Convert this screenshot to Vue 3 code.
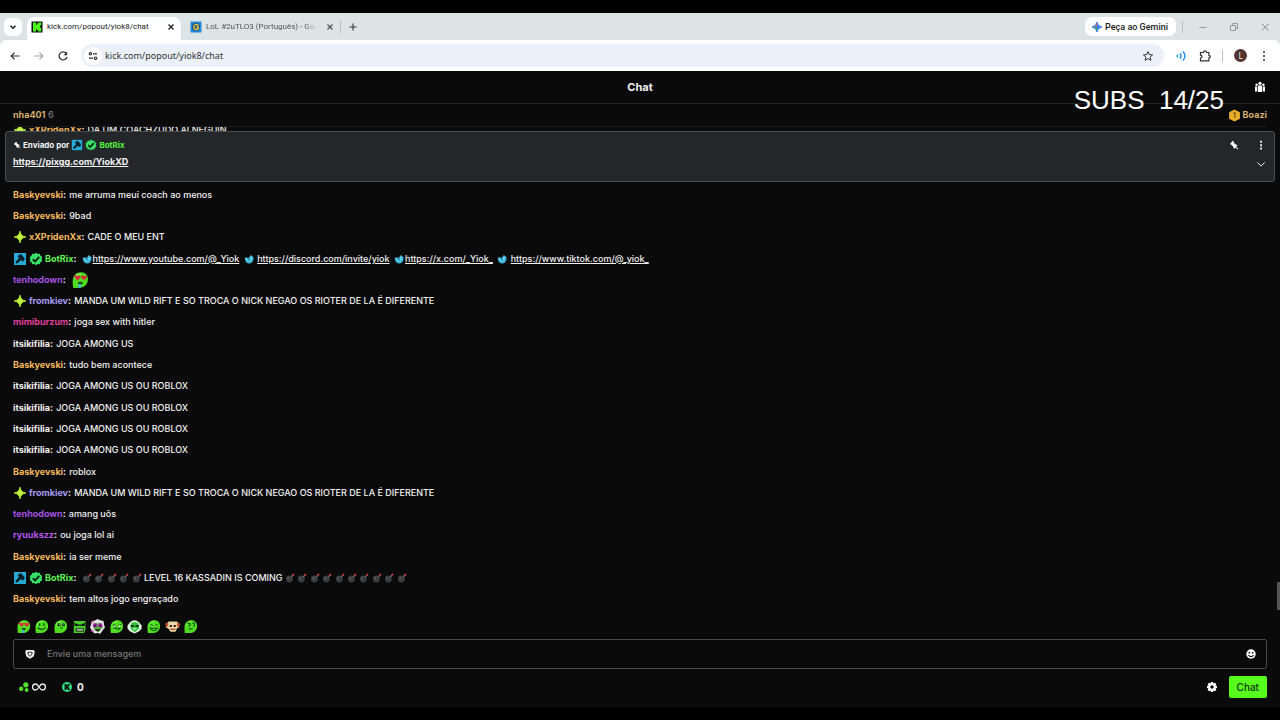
<script setup>
import { ref } from 'vue'

const draft = ref('')
const address = ref('kick.com/popout/yiok8/chat')
const subs = 'SUBS\u00a0 14/25'

const t = (text) => ({ type: 'text', text })
const link = (text) => ({ type: 'link', text })
const icon = (name) => ({ type: 'icon', name })
const bombs = (n) => Array.from({ length: n }, () => [icon('bomb'), t(' ')]).flat()

const gold = '#f4b860'
const green = '#63f554'
const lilac = '#a79bf2'
const violet = '#a352e0'

const bask = (text) => ({ name: 'Baskyevski', color: gold, badges: [], parts: [t(text)] })
const itsi = (text) => ({ name: 'itsikifilia', color: '#f0f0f0', badges: [], parts: [t(text)] })
const from = () => ({
  name: 'fromkiev',
  color: lilac,
  badges: ['star'],
  parts: [t('MANDA UM WILD RIFT E SO TROCA O NICK NEGAO OS RIOTER DE LA É DIFERENTE')],
})

const clipped = { name: 'xXPridenXx', color: gold, badges: ['star'], parts: [t('DA UM COACHZUDO AI NEGUIN')] }

const messages = [
  bask('me arruma meui coach ao menos'),
  bask('9bad'),
  { name: 'xXPridenXx', color: gold, badges: ['star'], parts: [t('CADE O MEU ENT')] },
  {
    name: 'BotRix',
    color: green,
    badges: ['mod', 'verified'],
    parts: [
      icon('drop'), link('https://www.youtube.com/@_Yiok'),
      t(' '), icon('drop'), t(' '), link('https://discord.com/invite/yiok'),
      t(' '), icon('drop'), link('https://x.com/_Yiok_'),
      t(' '), icon('drop'), t(' '), link('https://www.tiktok.com/@_yiok_'),
    ],
  },
  { name: 'tenhodown', color: violet, badges: [], parts: [icon('e0')] },
  from(),
  { name: 'mimiburzum', color: '#e0409c', badges: [], parts: [t('joga sex with hitler')] },
  itsi('JOGA AMONG US'),
  bask('tudo bem acontece'),
  itsi('JOGA AMONG US OU ROBLOX'),
  itsi('JOGA AMONG US OU ROBLOX'),
  itsi('JOGA AMONG US OU ROBLOX'),
  itsi('JOGA AMONG US OU ROBLOX'),
  bask('roblox'),
  from(),
  { name: 'tenhodown', color: violet, badges: [], parts: [t('amang uôs')] },
  { name: 'ryuukszz', color: '#b455ee', badges: [], parts: [t('ou joga lol ai')] },
  bask('ia ser meme'),
  {
    name: 'BotRix',
    color: green,
    badges: ['mod', 'verified'],
    parts: [t(' '), ...bombs(5), t('LEVEL 16 KASSADIN IS COMING '), ...bombs(10)],
  },
  bask('tem altos jogo engraçado'),
]

const iconClass = { e0: 'emote', drop: 'emoji drop', bomb: 'emoji' }

const emotes = Array.from({ length: 10 }, (_, i) => 'e' + i)
</script>

<template>
  <div class="screen">
    <svg class="defs" aria-hidden="true">
      <symbol id="star" viewBox="0 0 14 14">
        <path d="M7 1.200Q7.800 6.200 12.800 7 7.800 7.800 7 12.800 6.200 7.800 1.200 7 6.200 6.200 7 1.200Z" fill="#a5e22c" stroke="#a5e22c" stroke-width="1" />
        <path d="M7 3Q7.600 6.400 11 7 7.600 7.600 7 11 6.400 7.600 3 7 6.400 6.400 7 3Z" fill="#c9f04c" />
      </symbol>
      <symbol id="mod" viewBox="0 0 14 14">
        <rect x="1" y="1" width="12" height="12" fill="#27a9d6" />
        <path d="M6.200 2.400 8.400 2.600 11.600 6.200 11.200 8.600 9.400 9.400 8 8 4 11.800 2.200 10.200 6 6.200 4.800 4.800Z" fill="#0a2029" />
      </symbol>
      <symbol id="verified" viewBox="0 0 14 14">
        <path d="M7 .7 8.7 2l2.1-.2.7 2 1.8 1.1L12.7 7l.6 2.1-1.8 1.1-.7 2-2.1-.2L7 13.3 5.3 12l-2.1.2-.7-2L.7 9.1 1.3 7 .7 4.9l1.8-1.1.7-2 2.1.2Z" fill="#38e067" />
        <path d="m3.8 7.2 2.3 2.2 4.2-4.6" fill="none" stroke="#07240f" stroke-width="2" />
      </symbol>
      <symbol id="drop" viewBox="0 0 12 12">
        <path d="M1 4.6C3 3.600 4.500 4.600 6.200 4.400L7.600 1.400 9.600 2.200l1.800 2C11.800 8.400 9.600 11.400 6 11.400 2.800 11.400 1 8.600 1 4.600Z" fill="#3bb8dc" />
        <path d="M1.800 5.400C3.600 5 4 6.600 6 6.200c2-.4 1.400-2.400 3.200-2.600C9.400 7.400 5.200 10.600 1.800 5.400Z" fill="#8be6f4" />
        <path d="M3.600 5.200c1.600 0 2 1.600 4 .2L6 7.800Z" fill="#12567c" />
      </symbol>
      <symbol id="bomb" viewBox="0 0 12 12">
        <circle cx="5.2" cy="7.2" r="4.1" fill="#3b3d3f" />
        <circle cx="4" cy="6" r="1.2" fill="#5b5d5f" />
        <path d="m7.6 4.6 1.6-1.8" stroke="#777" stroke-width="1.6" />
        <path d="m9 2.900 1.800-1.800" stroke="#f04a42" stroke-width="1.8" />
      </symbol>
      <symbol id="blob" viewBox="0 0 16 16">
        <path d="M2 15C1.6 13 1.4 10.6 1.6 8 2 3.6 5 1.2 9 1.2c3.8 0 6 2.6 6 6.2 0 4.2-2.6 7-6.6 7.4Z" fill="#4fdd22" />
        <path d="M3.4 7C4 4 6.4 2.6 9 2.8" fill="none" stroke="#8bf55c" />
      </symbol>
      <symbol id="e0" viewBox="0 0 16 16">
        <use href="#blob" />
        <path d="M2.6 4.6c1-1.6 2.4-.8 3 .2.8-1.2 2.8-1 2.8.8L5.8 8.6ZM8.8 5.6c0-1.8 2-2 2.8-.8.8-1.2 2.8-1 2.6.8L11.6 8.4Z" fill="#dc2c3a" />
        <path d="M6 10.4q2-1.8 4.6 0l-.6 1.4H6.6Z" fill="#123a12" />
        <path d="M6.6 11.4h2.2V15H6.6Z" fill="#3fb4d8" />
      </symbol>
      <symbol id="e1" viewBox="0 0 16 16">
        <use href="#blob" />
        <path d="M6 4.5v3M10.6 4.5v3M4 9.4q4 3.4 8.6-.2" fill="none" stroke="#0d4413" stroke-width="1.3" />
      </symbol>
      <symbol id="e2" viewBox="0 0 16 16">
        <use href="#blob" />
        <circle cx="6.4" cy="6" r="1.7" fill="#15321a" /><circle cx="11.2" cy="6" r="1.7" fill="#15321a" />
        <circle cx="6.8" cy="5.4" r=".6" fill="#fff" /><circle cx="11.6" cy="5.4" r=".6" fill="#fff" />
        <path d="M7.4 9.6h3" stroke="#0d4413" />
      </symbol>
      <symbol id="e3" viewBox="0 0 16 16">
        <path d="M2 2h12.4v9.4L13 15H1.8Z" fill="#4ac92b" />
        <path d="m2.6 4 4.2 1.8h2.8L13.8 4v3.4H9.4L8.2 6.8 7 7.4H2.6Z" fill="#10240f" />
        <path d="M4 10h8.6v3.4H4Z" fill="#10240f" /><path d="M5 11.6h6.8" stroke="#eee" stroke-width="1.3" />
      </symbol>
      <symbol id="e4" viewBox="0 0 16 16">
        <path d="M8 0 11 1.4 14.4 2 15 6 16 9l-2.4 3L11 15.6 8 15l-3.4.4L2 12.2 0 9l1.2-3.4L2 2l3.4-.4Z" fill="#e4e2e6" />
        <path d="M4 4.4h8.4l1 5L8.6 14 4 11Z" fill="#47c52e" />
        <circle cx="5.4" cy="7" r="2.4" fill="#a922a8" /><circle cx="11" cy="7" r="2.4" fill="#a922a8" />
        <circle cx="5.4" cy="7" r="1" fill="#221027" /><circle cx="11" cy="7" r="1" fill="#221027" />
        <path d="M5 11h6.4l-1.8 2H7Z" fill="#251b26" /><path d="M1 3h3M1 13h3" stroke="#d13eab" stroke-width="1.4" />
      </symbol>
      <symbol id="e5" viewBox="0 0 16 16">
        <use href="#blob" />
        <path d="M4 6.2 7 7M10 6.8l3-1M5 10.2q2-1.4 3.4 0t3.8-.6" fill="none" stroke="#0d4413" stroke-width="1.1" />
        <circle cx="6" cy="7.8" r=".9" fill="#eee" /><circle cx="11.4" cy="7.4" r=".9" fill="#eee" />
      </symbol>
      <symbol id="e6" viewBox="0 0 16 16">
        <path d="M3 3.6Q8-1 13 3.6L15.6 7v3L13 13l-5 2.4L3 13 .6 10V7Z" fill="#e2f4e4" />
        <path d="M4 4.8Q8 1.6 12.4 4.8L13 10l-4.4 4L4 10.6Z" fill="#34c73a" />
        <path d="M4 6.4h3.4v2H4Zm5 0h3.4v2H9Z" fill="#15321a" /><path d="M6.4 11q2-1.6 3.6 0" stroke="#fff" fill="none" />
      </symbol>
      <symbol id="e7" viewBox="0 0 16 16">
        <use href="#blob" />
        <path d="M4.4 6.8q1.4-2 2.8 0M9.8 6.8q1.4-2 2.8 0M4.2 9.6q4.2 1 8.6 0-1 2.8-4.2 2.8T4.2 9.6Z" fill="none" stroke="#0d4413" stroke-width="1" />
      </symbol>
      <symbol id="e8" viewBox="0 0 16 16">
        <path d="M1 5.4 4 2.6h8.6L15.4 5l-.6 4-2 .8-1.6 3.8H6L3.4 10l-2-.6Z" fill="#e9d7a6" />
        <path d="M.6 4.6 3.4 4v4.2L.8 8ZM12.8 4l2.8.6V8l-2.8.2Z" fill="#c4502b" />
        <path d="M5 6.4h2.4v2.2H5Zm4.2 0h2.4v2.2H9.2Z" fill="#4b1c14" /><path d="M5.6 11h5.6" stroke="#b3422e" stroke-width="1.4" />
      </symbol>
      <symbol id="e9" viewBox="0 0 16 16">
        <use href="#blob" />
        <path d="M5 5.4q1.4-2 2.4-.2T6 8M10 4.6q2-1.2 2.4.6T10.8 8M6.4 11.2q2-1.4 4-.4" fill="none" stroke="#0d4413" stroke-width="1.1" />
      </symbol>
      <symbol id="pin" viewBox="0 0 12 12">
        <path d="M1.6 4.2 4.6 1l1.2 1.2-.1 1L8 5.4l1.4.2.8 1-1.7 1.6 2.7 2.4-.7.8L8 8.9 6.4 10.4l-1-.8L5.2 8 3 5.7l-1-.1Z" fill="#fff" />
      </symbol>
      <symbol id="dots" viewBox="0 0 12 12">
        <path d="M5 1h2.2v2.4H5Zm0 4h2.2v2.4H5Zm0 4h2.2v2.4H5Z" fill="currentColor" />
      </symbol>
      <symbol id="close" viewBox="0 0 12 12">
        <path d="m3.500 3.500 5 5M8.500 3.500l-5 5" fill="none" stroke="currentColor" stroke-width="1.3" />
      </symbol>
    </svg>

    <header class="browser">
      <div class="tabs">
        <button class="chip" aria-label="Pesquisar guias">
          <svg class="i12" viewBox="0 0 12 12"><path d="m3.500 4.800 2.500 2.500 2.500-2.500" fill="none" stroke="#222" stroke-width="1.5" /></svg>
        </button>
        <div class="tab active">
          <svg class="i12" viewBox="0 0 12 12">
            <rect x=".5" y=".5" width="11" height="11" fill="#0b120a" />
            <path d="M2 1.6h3v2.2h1V2.6h1.2V1.6h3v3H9v2h1.2v3.8h-3V9.2H6V8.2H5v2.2H2Z" fill="#4cf51d" />
          </svg>
          <span class="tab-title">kick.com/popout/yiok8/chat</span>
          <button class="plain" aria-label="Fechar"><svg class="i12"><use href="#close" /></svg></button>
        </div>
        <div class="tab">
          <svg class="i12" viewBox="0 0 12 12">
            <rect x=".5" y=".5" width="11" height="11" fill="#2089dc" />
            <circle cx="6" cy="6" r="4" fill="#184d75" />
            <path d="M8.400 4.400C6.600 2.600 3.800 3.600 3.800 6s2.800 3.400 4.400 1.800V6H6.400" fill="none" stroke="#e9c44a" stroke-width="1.5" />
          </svg>
          <span class="tab-title faded">LoL #2uTLO3 (Português) - Gar</span>
          <button class="plain" aria-label="Fechar"><svg class="i12"><use href="#close" /></svg></button>
        </div>
        <i class="sep"></i>
        <button class="plain plus" aria-label="Nova guia">
          <svg class="i12" viewBox="0 0 12 12"><path d="M6 2.4v7.2M2.4 6h7.2" stroke="#333" stroke-width="1.1" /></svg>
        </button>
        <div class="grow"></div>
        <button class="gemini">
          <svg class="i12" viewBox="0 0 12 12">
            <path d="M6 1Q6.600 5.400 11 6 6.600 6.600 6 11 5.400 6.600 1 6 5.400 5.400 6 1Z" fill="#3a7df0" stroke="#3a7df0" />
            <path d="M6 1Q5.400 5.400 3 5.600H6Z" fill="#e05a50" />
            <path d="M1 6q4.400.6 5 5V6Z" fill="#3fa36a" />
          </svg>
          Peça ao Gemini
        </button>
        <i class="sep win-sep"></i>
        <div class="window-buttons">
          <button class="plain" aria-label="Minimizar"><svg class="i12" viewBox="0 0 12 12"><path d="M2.500 6.500h7" stroke="#999" /></svg></button>
          <button class="plain" aria-label="Restaurar">
            <svg class="i12" viewBox="0 0 12 12"><path d="M2.500 4.500h5v5h-5ZM4.500 4.500v-2h5v5h-2" fill="none" stroke="#999" /></svg>
          </button>
          <button class="plain" aria-label="Fechar janela"><svg class="i12" viewBox="0 0 12 12"><path d="m3 3 6.500 6.500M9.500 3 3 9.500" stroke="#888" /></svg></button>
        </div>
      </div>

      <div class="toolbar">
        <button class="plain" aria-label="Voltar"><svg class="i12" viewBox="0 0 12 12"><path d="M10.500 6H2.400M5.600 2.600 2.200 6l3.400 3.400" fill="none" stroke="#333" stroke-width="1.200" /></svg></button>
        <button class="plain" aria-label="Avançar"><svg class="i12" viewBox="0 0 12 12"><path d="M1.500 6h8.100M6.400 2.600 9.800 6 6.400 9.400" fill="none" stroke="#a5a5a5" stroke-width="1.200" /></svg></button>
        <button class="plain" aria-label="Recarregar">
          <svg class="i12" viewBox="0 0 12 12"><path d="M9.300 3.500A4 4 0 1 0 10 6.800" fill="none" stroke="#333" stroke-width="1.300" /><path d="M10.200 1.500v3.700H6.500Z" fill="#333" /></svg>
        </button>
        <div class="address">
          <span class="site">
            <svg class="i12" viewBox="0 0 12 12" fill="none" stroke="#333" stroke-width="1.200"><circle cx="3.400" cy="3.800" r="1.200" /><path d="M6 3.800h4M2 8.200h4" /><circle cx="8.600" cy="8.200" r="1.200" /></svg>
          </span>
          <input v-model="address" aria-label="Endereço" />
          <button class="plain" aria-label="Favorito">
            <svg class="i12" viewBox="0 0 12 12"><path d="m6 1.600 1.300 3 3.300.3-2.500 2.200.8 3.200L6 8.600l-2.900 1.700.8-3.200L1.400 4.900l3.300-.3Z" fill="none" stroke="#333" /></svg>
          </button>
        </div>
        <div class="extensions">
          <svg class="i12" viewBox="0 0 12 12" fill="none" stroke="#1b93e8" stroke-width="1.400"><path d="M1 4.500q1.200 1.500 0 3M4 3.500q2 2.500 0 5M7 1.500q4 4.500 0 9" /></svg>
          <svg class="i12" viewBox="0 0 12 12"><path d="M1.500 2.500h3q0-1.600 1.500-1.600t1.500 1.600h2.400v3q1.500 0 1.500 1.100T9.900 7.900v2.900H1.500V8Q3 8 3 6.600T1.500 5.200Z" fill="none" stroke="#333" stroke-width="1.200" /></svg>
          <i class="sep"></i>
          <span class="avatar">L</span>
          <button class="plain" aria-label="Menu"><svg class="i12" viewBox="0 0 12 12" fill="#333"><circle cx="6" cy="2" r="1" /><circle cx="6" cy="6" r="1" /><circle cx="6" cy="10" r="1" /></svg></button>
        </div>
      </div>
    </header>

    <main class="chat">
      <div class="chat-head">
        <h1>Chat</h1>
        <button class="plain viewers" aria-label="Espectadores">
          <svg class="i12" viewBox="0 0 12 12" fill="#fff"><circle cx="6" cy="2.300" r="1.600" /><circle cx="2.600" cy="3.800" r="1.200" /><circle cx="9.400" cy="3.800" r="1.200" /><path d="M4 4.600h4V11H4ZM1 5.600h2.300v4.900H1ZM8.700 5.600H11v4.900H8.700Z" /></svg>
        </button>
      </div>

      <div class="ranking">
        <span><b>nha401</b> <span class="count">6</span></span>
        <span class="leader">
          <svg class="medal" viewBox="0 0 12 12"><path d="m6 .4 5 2.700v5.800L6 11.600 1 8.900V3.100Z" fill="#e9ad2c" /><path d="M5 4.200 6.400 3.400v5" fill="none" stroke="#8a5a0c" stroke-width="1.200" /></svg>
          <b>Boazi</b>
        </span>
      </div>

      <div class="peek">
        <p class="message">
          <span class="line"><svg v-for="b in clipped.badges" :key="b" class="badge"><use :href="'#' + b" /></svg><b :style="{ color: clipped.color }">{{ clipped.name }}</b><b class="colon">: </b><template v-for="(p, i) in clipped.parts" :key="i">{{ p.text }}</template></span>
        </p>
      </div>

      <section class="pinned">
        <div class="pinned-row">
          <svg class="tiny"><use href="#pin" /></svg>
          <b>Enviado por</b>
          <svg class="i12"><use href="#mod" /></svg>
          <svg class="i12"><use href="#verified" /></svg>
          <b class="bot">BotRix</b>
          <div class="grow"></div>
          <button class="plain unpin" aria-label="Desafixar"><svg class="small"><use href="#pin" /></svg></button>
          <button class="plain" aria-label="Opções"><svg class="small"><use href="#dots" /></svg></button>
        </div>
        <div class="pinned-row">
          <a href="https://pixgg.com/YiokXD">https://pixgg.com/YiokXD</a>
          <div class="grow"></div>
          <button class="plain expand" aria-label="Expandir"><svg class="small" viewBox="0 0 12 12"><path d="m1.500 4 4.500 4.500L10.500 4" fill="none" stroke="#eee" stroke-width="1.200" /></svg></button>
        </div>
      </section>

      <div class="messages">
        <p v-for="(m, n) in messages" :key="n" class="message">
          <span class="line"><svg v-for="b in m.badges" :key="b" class="badge"><use :href="'#' + b" /></svg><b :style="{ color: m.color }">{{ m.name }}</b><b class="colon">: </b><template v-for="(p, i) in m.parts" :key="i"><a v-if="p.type === 'link'" :href="p.text">{{ p.text }}</a><svg v-else-if="p.type === 'icon'" :class="iconClass[p.name]"><use :href="'#' + p.name" /></svg><template v-else>{{ p.text }}</template></template></span>
        </p>
        <i class="thumb"></i>
      </div>

      <div class="emotes">
        <button v-for="e in emotes" :key="e" class="plain" :aria-label="'Emote ' + e"><svg class="quick"><use :href="'#' + e" /></svg></button>
      </div>

      <form class="composer" @submit.prevent>
        <div class="field">
          <svg class="i12" viewBox="0 0 12 12"><path d="M2.400 2h7.200l1.200 1.400-1 4.800L6 10.800 2.200 8.200l-1-4.800Z" fill="#f2f2f2" /><path d="M3.800 4.200h4.400L7.600 7 6 8.200 4.400 7Z" fill="none" stroke="#333" /></svg>
          <input v-model="draft" placeholder="Envie uma mensagem" aria-label="Mensagem" />
          <button class="plain" type="button" aria-label="Emotes">
            <svg class="i12" viewBox="0 0 12 12"><circle cx="6" cy="6" r="4.700" fill="#fff" /><path d="M3.600 4h1.600v1.600H3.600ZM6.800 4h1.600v1.600H6.800Z" fill="#111" /><path d="M3.400 7.200q2.600 2.800 5.200 0" fill="none" stroke="#111" stroke-width="1.200" /></svg>
          </button>
        </div>
        <div class="actions">
          <span class="points">
            <svg class="i12" viewBox="0 0 12 12" fill="#53e22c"><circle cx="7.800" cy="3.800" r="2.600" /><circle cx="3.200" cy="7.800" r="2.200" /><circle cx="8.600" cy="9" r="1.900" /></svg>
            <svg class="infinity" viewBox="0 0 14 10"><path d="M7 5C5.500 2.600 4.700 2 3.600 2a3 3 0 0 0 0 6C4.700 8 5.500 7.400 7 5s2.300-3 3.400-3a3 3 0 0 1 0 6C9.300 8 8.500 7.400 7 5Z" fill="none" stroke="#eee" stroke-width="1.300" /></svg>
          </span>
          <span class="kicks">
            <svg class="i12" viewBox="0 0 12 12"><circle cx="6" cy="6" r="5" fill="#33dc80" /><path d="M3.600 3h1.800v1.800L7 3h2.200L7.400 6l1.800 3H7L5.400 7.200V9H3.600Z" fill="#0a1a10" /></svg>
            <b>0</b>
          </span>
          <div class="grow"></div>
          <button class="plain" type="button" aria-label="Configurações">
            <svg class="i12" viewBox="0 0 12 12"><path d="M5 1h2l.4 1.400 1.500-.7 1.400 1.400-.7 1.500L11 5v2l-1.400.4.7 1.500-1.400 1.400-1.500-.7L7 11H5l-.4-1.400-1.500.7-1.400-1.400.7-1.500L1 7V5l1.400-.4-.7-1.500 1.400-1.400 1.500.7ZM6 4.300a1.700 1.700 0 1 0 0 3.400 1.700 1.700 0 0 0 0-3.400Z" fill="#fff" fill-rule="evenodd" /></svg>
          </button>
          <button class="send" type="submit">Chat</button>
        </div>
      </form>

      <div class="subs">{{ subs }}</div>
    </main>
  </div>
</template>

<style>
body {
  background: #000;
}
</style>

<style scoped>
* {
  box-sizing: border-box;
}
.screen {
  display: flex;
  flex-direction: column;
  min-height: 100vh;
  padding: 13px 0;
  background: #000;
  color: #f2f2f2;
  font: 500 9px/14px Inter, "Liberation Sans", sans-serif;
}
.defs {
  position: absolute;
  width: 0;
  height: 0;
}
svg {
  display: block;
  flex: none;
}
.i12 {
  width: 12px;
  height: 12px;
}
.small {
  width: 10px;
  height: 10px;
}
.tiny {
  width: 8px;
  height: 8px;
}
.grow {
  flex: 1;
}
button {
  font: inherit;
  color: inherit;
  border: 0;
  cursor: pointer;
}
.plain {
  display: flex;
  padding: 0;
  background: none;
}
input {
  flex: 1;
  min-width: 0;
  padding: 0;
  border: 0;
  outline: 0;
  background: none;
  font: inherit;
  color: inherit;
}

.browser {
  background: #dde4e6;
  color: #333;
  font-family: "Noto Sans", "Open Sans", sans-serif;
  font-weight: 400;
}
.tabs {
  display: flex;
  align-items: center;
  height: 27px;
  padding: 0 9px 0 4px;
  font-family: Roboto, "Noto Sans", sans-serif;
  font-size: 8px;
}
.chip {
  display: grid;
  place-items: center;
  width: 18px;
  height: 18px;
  margin-right: 5px;
  padding: 0;
  border-radius: 6px;
  background: #fdfefe;
}
.tab {
  display: flex;
  align-items: center;
  width: 154px;
  height: 23px;
  padding: 0 4px;
  color: #555;
}
.tab.active {
  align-self: flex-end;
  color: #222;
  padding-bottom: 4px;
  margin-right: 5px;
  border-radius: 8px 8px 0 0;
  background: #fff;
}
.tab-title {
  flex: 1;
  min-width: 0;
  margin: 0 8px 0 4px;
  white-space: nowrap;
}
.faded {
  mask-image: linear-gradient(90deg, #000 90%, transparent);
}
.sep {
  width: 1px;
  height: 12px;
  background: #b8c0c4;
}
.plus {
  margin-left: 6px;
}
.gemini {
  display: flex;
  align-items: center;
  gap: 2px;
  height: 19px;
  padding: 0 8px 0 6px;
  border-radius: 7px;
  background: #fff;
  font-size: 9px;
  font-weight: 500;
  color: #222;
}
.win-sep {
  margin: 0 14px 0 6px;
}
.window-buttons {
  display: flex;
  gap: 19px;
}
.toolbar {
  display: flex;
  align-items: center;
  gap: 12px;
  height: 31px;
  padding: 0 10px 0 9px;
  border-radius: 6px 6px 0 0;
  background: #fff;
}
.address {
  display: flex;
  flex: 1;
  align-items: center;
  height: 23px;
  padding: 0 10px 0 3px;
  border-radius: 12px;
  background: #ebf0fa;
  font-size: 9px;
}
.site {
  display: grid;
  place-items: center;
  width: 18px;
  height: 18px;
  margin-right: 3px;
  border-radius: 9px;
  background: #fff;
}
.extensions {
  display: flex;
  align-items: center;
  gap: 11px;
}
.avatar {
  width: 13px;
  height: 13px;
  border-radius: 50%;
  background: #54342f;
  color: #eee;
  font-size: 8px;
  line-height: 13px;
  text-align: center;
}

.chat {
  position: relative;
  display: flex;
  flex: 1;
  flex-direction: column;
  background: #0a0a0a;
}
.chat-head {
  display: grid;
  grid-template-columns: 1fr auto 1fr;
  align-items: center;
  height: 33px;
  padding: 0 14px;
  border-bottom: 1px solid #222;
}
h1 {
  grid-column: 2;
  margin: 0;
  font-size: 11px;
  line-height: 16px;
}
.viewers {
  justify-self: end;
}
.ranking {
  display: flex;
  align-items: center;
  justify-content: space-between;
  height: 23px;
  margin: 0 13px;
  border-bottom: 1px solid #1c1c1c;
}
.ranking b {
  color: #d3ad6c;
}
.count {
  color: #777;
}
.leader {
  display: flex;
  align-items: center;
  gap: 2px;
}
.medal {
  width: 13px;
  height: 13px;
}
.peek {
  display: flex;
  align-items: flex-start;
  height: 4px;
  padding: 0 13px;
  overflow: hidden;
}
.peek .message {
  flex: none;
  margin-top: -4px;
}
.pinned {
  display: flex;
  flex-direction: column;
  gap: 3px;
  height: 51px;
  margin: 0 5px 2px;
  padding: 6px 8px 6px 7px;
  border: 1px solid #4a4e50;
  border-radius: 3px;
  background: #23272a;
}
.pinned-row {
  display: flex;
  align-items: center;
  gap: 2px;
  height: 14px;
}
.pinned-row b {
  font-size: 8px;
}
.pinned-row .bot {
  color: #55f23c;
}
.pinned-row a {
  font-weight: 700;
}
.unpin {
  margin-right: 15px;
}
.expand {
  align-self: flex-end;
}
a {
  color: inherit;
  text-underline-offset: 1px;
}
.messages {
  position: relative;
  display: flex;
  flex: 1;
  flex-direction: column;
  padding: 0 13px;
}
.message {
  display: flex;
  flex: 1;
  align-items: center;
  min-height: 0;
  margin: 0;
}
.line {
  white-space: pre;
}
.line svg {
  display: inline-block;
}
.colon {
  margin-right: 1px;
}
.badge {
  width: 14px;
  height: 14px;
  margin: -2px 2px -2px 0;
  vertical-align: -2px;
}
.emoji {
  width: 10px;
  height: 10px;
  vertical-align: -2px;
}
.drop {
  margin: 0 1px 0 2px;
}
.emote {
  width: 18px;
  height: 18px;
  margin: -4px 2px;
  vertical-align: -2px;
}
.thumb {
  position: absolute;
  right: 0;
  bottom: 0;
  width: 3px;
  height: 28px;
  background: #555;
}
.emotes {
  display: grid;
  grid-template-columns: repeat(10, 1fr);
  justify-items: center;
  align-items: center;
  width: 186px;
  height: 29px;
  margin-left: 14px;
  padding-top: 4px;
}
.quick {
  width: 15px;
  height: 15px;
}
.composer {
  padding: 0 13px 9px;
}
.field {
  display: flex;
  align-items: center;
  gap: 11px;
  height: 30px;
  padding: 0 9px 0 10px;
  border: 1px solid #45494b;
  border-radius: 2px;
}
.field input::placeholder {
  color: #777;
  opacity: 1;
}
.actions {
  display: flex;
  align-items: center;
  height: 22px;
  margin-top: 7px;
  padding-left: 5px;
  font-size: 10px;
}
.points,
.kicks {
  display: flex;
  align-items: center;
  gap: 2px;
}
.infinity {
  width: 14px;
  height: 10px;
}
.kicks {
  gap: 4px;
  margin-left: 15px;
}
.send {
  height: 22px;
  margin-left: 11px;
  padding: 0 8px;
  border-radius: 2px;
  background: #57fb1d;
  color: #0b3305;
  font-weight: 500;
}
.subs {
  position: absolute;
  top: 14px;
  right: 56px;
  font: 26px/30px "Liberation Sans", Arial, sans-serif;
  color: #fff;
  white-space: pre;
}
</style>
